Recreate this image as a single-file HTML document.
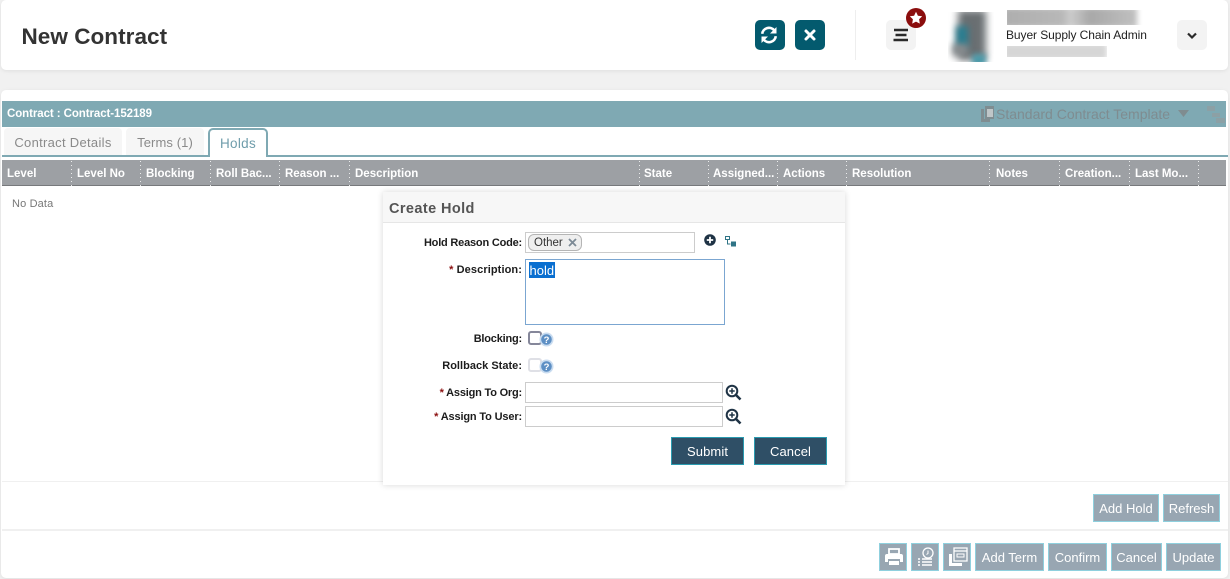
<!DOCTYPE html>
<html><head><meta charset="utf-8"><title>New Contract</title>
<style>
html,body{margin:0;padding:0}
body{width:1230px;height:579px;overflow:hidden;position:relative;background:#f1f1f1;font-family:"Liberation Sans","DejaVu Sans",sans-serif;color:#222}
.a{position:absolute;white-space:nowrap}
.card{background:#fff;border-radius:5px;box-shadow:0 1px 4px rgba(0,0,0,.08)}
.th{position:absolute;top:160px;height:26px;line-height:28px;color:#fff;font-weight:bold;font-size:11.5px;letter-spacing:0;white-space:nowrap}
.sep{position:absolute;top:161px;height:25px;width:1px;background:repeating-linear-gradient(to bottom,#eceded 0,#eceded 1px,transparent 1px,transparent 4px)}
.lab{position:absolute;right:708px;font-weight:bold;font-size:11px;letter-spacing:-.2px;color:#1c1c1c;white-space:nowrap;text-align:right}
.lab b{color:#8b1010}
.in{position:absolute;background:#fff;border:1px solid #ccc;box-sizing:border-box}
.btn{position:absolute;background:#2f4f66;color:#fff;border:1px solid #2a9bb0;box-sizing:border-box;font-size:13px;text-align:center;line-height:27px;letter-spacing:.1px}
.gb{position:absolute;background:#98a6b2;color:#fff;border:1px solid #8fd0de;box-sizing:border-box;font-size:13px;text-align:center;line-height:27px;height:28px;white-space:nowrap}
</style></head><body>

<div class="card a" style="left:1px;top:0;width:1227px;height:70px"></div>
<div class="a" style="left:21.500px;top:23px;font-size:22.500px;letter-spacing:.05px;font-weight:bold;color:#333;line-height:28px">New Contract</div>

<div class="a" style="left:755px;top:20px;width:30px;height:30px;border-radius:5px;background:#035a6e"></div>
<svg class="a" style="left:754px;top:20px" width="30" height="30" viewBox="0 0 30 30" fill="none" stroke="#fff" stroke-width="2.600"><path d="M8.200 13.800a6.800 6.800 0 0 1 12-3.500"/><path d="M21.800 16.200a6.800 6.800 0 0 1-12 3.500"/><path d="M22.500 7v6.500h-6.500z" fill="#fff" stroke="none"/><path d="M7.500 23v-6.500h6.500z" fill="#fff" stroke="none"/></svg>
<div class="a" style="left:795px;top:20px;width:30px;height:30px;border-radius:5px;background:#035a6e"></div>
<svg class="a" style="left:795px;top:20px" width="30" height="30" viewBox="0 0 30 30" stroke="#fff" stroke-width="3" stroke-linecap="round"><path d="M11 11l8 8M19 11l-8 8"/></svg>
<div class="a" style="left:855px;top:10px;width:1px;height:50px;background:#eee"></div>

<div class="a" style="left:886px;top:20px;width:30px;height:30px;border-radius:5px;background:#f3f3f3"></div>
<svg class="a" style="left:886px;top:20px" width="30" height="30" viewBox="0 0 30 30" stroke="#2a2a2a" stroke-width="2.400"><path d="M8 10h14M9.500 15h11M7.500 20h14.500"/></svg>
<div class="a" style="left:906px;top:8px;width:20px;height:20px;border-radius:50%;background:#8b0d0d"></div>
<svg class="a" style="left:906px;top:8px" width="20" height="20" viewBox="0 0 20 20"><path d="M10 3.800l1.900 3.900 4.300.6-3.100 3 .7 4.300-3.800-2-3.800 2 .7-4.300-3.100-3 4.300-.6z" fill="#fff"/></svg>

<div class="a" style="left:948px;top:12px;width:46px;height:50px;overflow:hidden;background:#fff">
 <div class="a" style="left:10px;top:-2px;width:28px;height:50px;background:#6a6f72;filter:blur(4px)"></div>
 <div class="a" style="left:8px;top:14px;width:12px;height:22px;background:#287d90;filter:blur(3.500px)"></div>
 <div class="a" style="left:24px;top:42px;width:14px;height:12px;background:#4a98a8;filter:blur(3px)"></div>
 <div class="a" style="left:4px;top:32px;width:16px;height:12px;background:#85898c;filter:blur(3.500px)"></div>
</div>
<div class="a" style="left:1007px;top:10px;width:136px;height:15px;overflow:hidden">
 <div class="a" style="left:-4px;top:-3px;width:134px;height:21px;filter:blur(3px);background:linear-gradient(to right,#aeaeae,#b8b8b8 45%,#cdcdcd 50%,#a8a8a8 65%,#bdbdbd 95%)"></div>
</div>
<div class="a" style="left:1006px;top:26px;font-size:12px;letter-spacing:-.08px;line-height:18px;color:#222;background:#fff;padding-right:4px">Buyer Supply Chain Admin</div>
<div class="a" style="left:1007px;top:46px;width:100px;height:11px;overflow:hidden">
 <div class="a" style="left:-4px;top:-3px;width:104px;height:17px;filter:blur(3px);background:#d6d6d6"></div>
</div>
<div class="a" style="left:1177px;top:20px;width:30px;height:30px;border-radius:5px;background:#f3f3f3"></div>
<svg class="a" style="left:1177px;top:20px" width="30" height="30" viewBox="0 0 30 30" fill="none" stroke="#2a2a2a" stroke-width="2.200"><path d="M11 13.500l4 4 4-4"/></svg>

<div class="card a" style="left:1px;top:90px;width:1227px;height:488px"></div>

<div class="a" style="left:2px;top:101px;width:1224px;height:26px;background:#7fa9b3"></div>
<div class="a" style="left:7px;top:101px;line-height:27px;font-size:11.500px;font-weight:bold;color:#fff;letter-spacing:-.08px">Contract : Contract-152189</div>
<svg class="a" style="left:980px;top:105px" width="16" height="18" viewBox="0 0 16 18"><path d="M1 4h3v10h6v3H1z" fill="#7f8d91"/><path d="M5 1h9v13H5z" fill="#7f8d91"/><path d="M7 5h6M7 7h6M7 9h6M7 11h6" stroke="#fff" stroke-width="1"/></svg>
<div class="a" style="left:996px;top:101px;line-height:27px;font-size:14px;color:#7f8c90">Standard Contract Template</div>
<svg class="a" style="left:1177px;top:109px" width="14" height="9"><path d="M1 1h11l-5.500 7z" fill="#7f8c90"/></svg>
<svg class="a" style="left:1206px;top:105px" width="20" height="18"><path d="M1 1h8v5H1zM6 8h8v4H6zM10 13h9v5h-9z" fill="#8ca0a5"/></svg>

<div class="a" style="left:4px;top:128px;width:118px;height:27px;background:#f6f6f6;border-radius:4px 4px 0 0;text-align:center;line-height:30px;font-size:13px;color:#8a8a8a;letter-spacing:.3px">Contract Details</div>
<div class="a" style="left:126px;top:128px;width:78px;height:27px;background:#f6f6f6;border-radius:4px 4px 0 0;text-align:center;line-height:30px;font-size:13px;color:#8a8a8a;letter-spacing:.1px">Terms (1)</div>
<div class="a" style="left:2px;top:155px;width:1226px;height:2px;background:#7fa9b3"></div>
<div class="a" style="left:208px;top:128px;width:60px;height:29px;box-sizing:border-box;background:#fff;border:2px solid #7fa9b3;border-bottom:none;border-radius:5px 5px 0 0;text-align:center;line-height:27px;font-size:13.500px;color:#6f9dab;letter-spacing:.3px">Holds</div>

<div class="a" style="left:2px;top:160px;width:1224px;height:25px;background:#9da0a4;border-bottom:1px solid #77797c"></div>
<div class="th" style="left:7px">Level</div>
<div class="th" style="left:77px">Level No</div>
<div class="th" style="left:146px">Blocking</div>
<div class="th" style="left:216px">Roll Bac...</div>
<div class="th" style="left:285px">Reason ...</div>
<div class="th" style="left:355px">Description</div>
<div class="th" style="left:644px">State</div>
<div class="th" style="left:713px">Assigned...</div>
<div class="th" style="left:783px">Actions</div>
<div class="th" style="left:852px">Resolution</div>
<div class="th" style="left:996px">Notes</div>
<div class="th" style="left:1065px">Creation...</div>
<div class="th" style="left:1135px">Last Mo...</div>
<div class="sep" style="left:71px"></div><div class="sep" style="left:140px"></div><div class="sep" style="left:210px"></div><div class="sep" style="left:279px"></div><div class="sep" style="left:349px"></div><div class="sep" style="left:639px"></div><div class="sep" style="left:708px"></div><div class="sep" style="left:777px"></div><div class="sep" style="left:846px"></div><div class="sep" style="left:989px"></div><div class="sep" style="left:1059px"></div><div class="sep" style="left:1129px"></div><div class="sep" style="left:1198px"></div>
<div class="a" style="left:12px;top:197px;font-size:11px;line-height:15px;color:#777;letter-spacing:.15px">No Data</div>

<div class="a" style="left:2px;top:481px;width:1226px;height:1px;background:#f0f0f0"></div>
<div class="a" style="left:2px;top:529px;width:1226px;height:2px;background:#f0f0f0"></div>
<div class="gb" style="left:1093px;top:494px;width:66px">Add Hold</div>
<div class="gb" style="left:1163px;top:494px;width:57px">Refresh</div>

<div class="gb" style="left:879px;top:543px;width:28px"></div>
<svg class="a" style="left:880px;top:543px" width="28" height="28" viewBox="0 0 28 28" fill="#fff"><path d="M9 6h10v5H9z" fill="none" stroke="#fff" stroke-width="1.800"/><path d="M7 11h14a2 2 0 0 1 2 2v6h-3v-3H8v3H5v-6a2 2 0 0 1 2-2z"/><path d="M9 18h10v4H9z"/></svg>
<div class="gb" style="left:911px;top:543px;width:28px"></div>
<svg class="a" style="left:910px;top:543px" width="28" height="28" viewBox="0 0 28 28" fill="none" stroke="#fff"><circle cx="18" cy="10" r="5" stroke-width="1.300"/><path d="M18 7.500v3l-1.500 1" stroke-width="1"/><path d="M8 16h2M12 16h10M8 19h2M12 19h10M8 22h2M12 22h10" stroke-width="1.600"/></svg>
<div class="gb" style="left:943px;top:543px;width:28px"></div>
<svg class="a" style="left:943px;top:543px" width="28" height="28" viewBox="0 0 28 28" fill="none" stroke="#fff"><path d="M11 5h13v13H11z" stroke-width="1.300"/><path d="M11 8h13" stroke-width="1.300"/><path d="M14 11h7v3h-7z" stroke-width="1"/><path d="M6 11h3v9h10v3H6z" fill="#fff" stroke="none"/></svg>
<div class="gb" style="left:975px;top:543px;width:69px">Add Term</div>
<div class="gb" style="left:1048px;top:543px;width:59px">Confirm</div>
<div class="gb" style="left:1111px;top:543px;width:51px">Cancel</div>
<div class="gb" style="left:1166px;top:543px;width:55px">Update</div>

<div class="a" style="left:383px;top:192px;width:462px;height:293px;background:#fff;box-shadow:0 0 6px rgba(0,0,0,.16)"></div>
<div class="a" style="left:383px;top:192px;width:462px;height:30px;background:#f7f7f7;border-bottom:1px solid #e6e6e6"></div>
<div class="a" style="left:389px;top:199px;font-size:14.500px;line-height:20px;font-weight:bold;color:#555;letter-spacing:.4px">Create Hold</div>

<div class="lab" style="top:235px;line-height:16px">Hold Reason Code:</div>
<div class="in" style="left:525px;top:232px;width:170px;height:21px"></div>
<div class="a" style="left:528px;top:234px;width:54px;height:17px;box-sizing:border-box;background:#efefef;border:1px solid #b5b5b5;border-radius:6px;font-size:11.500px;line-height:16px;padding-left:5px;color:#333">Other</div>
<svg class="a" style="left:567px;top:237px" width="11" height="11" stroke="#7d8a96" stroke-width="1.800"><path d="M2 2l7 7M9 2l-7 7"/></svg>
<svg class="a" style="left:703px;top:233px" width="14" height="14"><circle cx="7" cy="7" r="5.800" fill="#1f3345"/><path d="M7 3.800v6.400M3.800 7h6.400" stroke="#fff" stroke-width="1.800"/></svg>
<svg class="a" style="left:724px;top:235px" width="14" height="12" fill="none"><path d="M1.500 1.500h4v3h-4z" stroke="#2f7486"/><path d="M3.500 5v4h3" stroke="#2f7486"/><path d="M7 6.500h5v5H7z" fill="#2f7486"/></svg>

<div class="lab" style="top:262px;line-height:16px;letter-spacing:.1px"><b>*</b> Description:</div>
<div class="a" style="left:525px;top:259px;width:200px;height:66px;box-sizing:border-box;background:#fff;border:1px solid #7ba6d1"></div>
<div class="a" style="left:529px;top:262px;height:16px;line-height:17px;background:#0a6fd0;color:#fff;font-size:13px;padding:0 .5px">hold</div>

<div class="lab" style="top:331px;line-height:16px">Blocking:</div>
<div class="a" style="left:528px;top:331px;width:14px;height:14px;box-sizing:border-box;background:#fff;border:2px solid #85879a;border-radius:3px"></div>
<div class="lab" style="top:358px;line-height:16px;letter-spacing:.02px">Rollback State:</div>
<div class="a" style="left:528px;top:358px;width:14px;height:14px;box-sizing:border-box;background:#fff;border:2px solid #dfe0e6;border-radius:3px"></div>
<svg class="a" style="left:539px;top:332px" width="15" height="15"><circle cx="7.500" cy="7.500" r="7" fill="#c9dcf0"/><circle cx="7.500" cy="7.500" r="5.300" fill="#5d8fc4"/><text x="7.500" y="11" text-anchor="middle" font-size="9.500" font-weight="bold" fill="#fff" font-family="Liberation Sans">?</text></svg>
<svg class="a" style="left:539px;top:359px" width="15" height="15"><circle cx="7.500" cy="7.500" r="7" fill="#c9dcf0"/><circle cx="7.500" cy="7.500" r="5.300" fill="#5d8fc4"/><text x="7.500" y="11" text-anchor="middle" font-size="9.500" font-weight="bold" fill="#fff" font-family="Liberation Sans">?</text></svg>

<div class="lab" style="top:385px;line-height:16px"><b>*</b> Assign To Org:</div>
<div class="in" style="left:525px;top:382px;width:198px;height:21px"></div>
<div class="lab" style="top:409px;line-height:16px;letter-spacing:-.15px"><b>*</b> Assign To User:</div>
<div class="in" style="left:525px;top:406px;width:198px;height:21px"></div>
<svg class="a" style="left:725px;top:384px" width="17" height="17" fill="none" stroke="#1f3345"><circle cx="7" cy="7" r="5.300" stroke-width="2"/><path d="M7 4.300v5.400M4.300 7h5.400" stroke-width="1.500"/><path d="M11 11l4.500 4.500" stroke-width="2.600"/></svg>
<svg class="a" style="left:725px;top:408px" width="17" height="17" fill="none" stroke="#1f3345"><circle cx="7" cy="7" r="5.300" stroke-width="2"/><path d="M7 4.300v5.400M4.300 7h5.400" stroke-width="1.500"/><path d="M11 11l4.500 4.500" stroke-width="2.600"/></svg>

<div class="btn" style="left:671px;top:437px;width:73px;height:28px">Submit</div>
<div class="btn" style="left:754px;top:437px;width:73px;height:28px">Cancel</div>

</body></html>
